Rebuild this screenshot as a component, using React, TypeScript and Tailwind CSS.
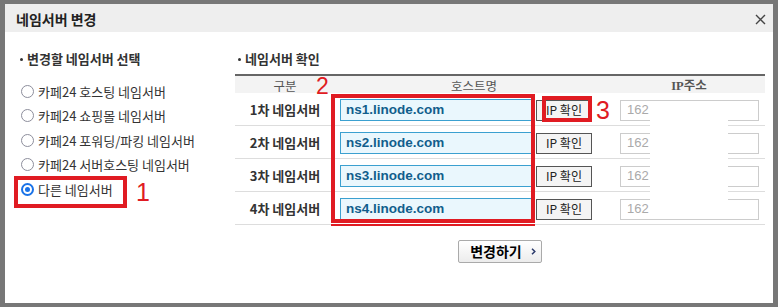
import React from 'react';

const servers = ['카페24 호스팅 네임서버', '카페24 쇼핑몰 네임서버', '카페24 포워딩/파킹 네임서버', '카페24 서버호스팅 네임서버', '다른 네임서버'];
const hosts = ['ns1.linode.com', 'ns2.linode.com', 'ns3.linode.com', 'ns4.linode.com'];

const kr = { fontFamily: '"Noto Sans CJK KR", "Liberation Sans", sans-serif' };

function Radio({ checked }: { checked?: boolean }) {
  if (checked) {
    return (
      <span className="w-[13px] h-[13px] rounded-full border-[2px] border-[#1a73e8] bg-white flex items-center justify-center">
        <span className="w-[5px] h-[5px] rounded-full bg-[#1a73e8]" />
      </span>
    );
  }
  return <span className="w-[13px] h-[13px] rounded-full border-[1.5px] border-[#8d8e9c] bg-white" />;
}

const App = () => {
  return (
    <div className="w-[778px] h-[307px] bg-[#777777] pt-[4px] px-[5px] pb-[4px]" style={kr}>
      <div className="relative bg-white h-full flex flex-col text-[#222]">
        {/* header */}
        <div className="h-[28px] bg-[#eeeeee] flex items-center justify-between pl-[11px] pr-[7px] pt-[2px]">
          <span className="text-[14px] font-bold text-[#222]">네임서버 변경</span>
          <svg width="11" height="11" viewBox="0 0 11 11">
            <path d="M1 1 L10 10 M10 1 L1 10" stroke="#444" strokeWidth="1.4" />
          </svg>
        </div>

        <div className="flex flex-1">
          {/* left: choose */}
          <div className="w-[230px] pl-[15px] pt-[19px]">
            <div className="h-[16px] flex items-center gap-[4px] text-[13px] font-bold text-[#333]">
              <span className="w-[3px] h-[3px] rounded-full bg-[#333]" />
              변경할 네임서버 선택
            </div>
            <div className="mt-[12px]">
              {servers.map((s, i) => (
                <div key={s} className="h-[24.5px] flex items-center gap-[4px] pl-[1px] text-[13px] text-[#333]">
                  <Radio checked={i === 4} />
                  {s}
                </div>
              ))}
            </div>
          </div>

          {/* right: confirm */}
          <div className="w-[530px] pt-[19px]">
            <div className="h-[16px] flex items-center gap-[4px] pl-[3px] text-[13px] font-bold text-[#333]">
              <span className="w-[3px] h-[3px] rounded-full bg-[#333]" />
              네임서버 확인
            </div>
            <div className="mt-[7px] border-t-2 border-[#666]">
              <div className="grid grid-cols-[100px_278px_152px] h-[17px] bg-[#f3f3f3] text-[12.5px] text-[#555] items-center text-center">
                <span>구분</span>
                <span>호스트명</span>
                <span className="font-bold">
                  <span style={{ fontFamily: '"Liberation Serif", serif' }}>IP</span>주소
                </span>
              </div>
              {hosts.map((h, i) => (
                <div key={h} className="grid grid-cols-[100px_278px_152px] h-[33px] border-b border-[#dddddd] items-center pt-[2px]">
                  <span className="text-center text-[13px] font-bold text-[#333]">{i + 1}차 네임서버</span>
                  <div className="flex items-center gap-[4px] pl-[5px]">
                    <div
                      className="w-[192px] h-[22px] border border-[#3ba0d0] bg-[#eaf7fd] pl-[5px] pt-[1px] flex items-center text-[13.5px] font-bold text-[#115e8c]"
                      style={{ fontFamily: '"Liberation Sans", sans-serif' }}
                    >
                      {h}
                    </div>
                    <button className="w-[56px] h-[21px] border border-[#555] bg-[#f4f4f4] text-[12px] text-[#222] flex items-center justify-center">
                      IP 확인
                    </button>
                  </div>
                  <div className="pl-[7px]">
                    <div
                      className="w-[139px] h-[21px] border border-[#cccccc] pl-[6px] flex items-center text-[13px] text-[#aaa]"
                      style={{ fontFamily: '"Liberation Sans", sans-serif' }}
                    >
                      162
                    </div>
                  </div>
                </div>
              ))}
            </div>
            <div className="flex justify-center mt-[15px]">
              <button className="w-[84px] h-[23px] rounded-[2px] border border-[#aaaaaa] bg-gradient-to-b from-white to-[#ececec] flex items-center justify-center gap-[9px] pl-[6px]">
                <span className="text-[14px] font-bold text-black">변경하기</span>
                <svg width="5" height="7" viewBox="0 0 5 7">
                  <path d="M1 0.8 L3.8 3.5 L1 6.2" stroke="#2b3a6b" strokeWidth="1.5" fill="none" />
                </svg>
              </button>
            </div>
          </div>
        </div>

        {/* redaction */}
        <div className="absolute left-[645px] top-[111px] w-[78px] h-[103px] bg-white" />

        {/* annotations */}
        <div className="absolute left-[9px] top-[172px] w-[113px] h-[32px] border-[4px] border-[#e01b22]" />
        <span className="absolute left-[131px] top-[176px] text-[25px] leading-none text-[#e01b22]" style={{ fontFamily: '"Liberation Sans", sans-serif' }}>1</span>

        <div className="absolute left-[326px] top-[90px] w-[204px] h-[129px] border-[4px] border-[#e01b22]" />
        <div className="absolute left-[326px] top-[220px] w-[204px] h-[2px] bg-[#e01b22]" />
        <span className="absolute left-[311px] top-[71px] text-[23px] leading-none text-[#e01b22]" style={{ fontFamily: '"Liberation Sans", sans-serif' }}>2</span>

        <div className="absolute left-[537px] top-[92px] w-[50px] h-[26px] border-[4px] border-[#e01b22]" />
        <span className="absolute left-[591px] top-[94px] text-[25px] leading-none text-[#e01b22]" style={{ fontFamily: '"Liberation Sans", sans-serif' }}>3</span>
      </div>
    </div>
  );
};

export default App;
